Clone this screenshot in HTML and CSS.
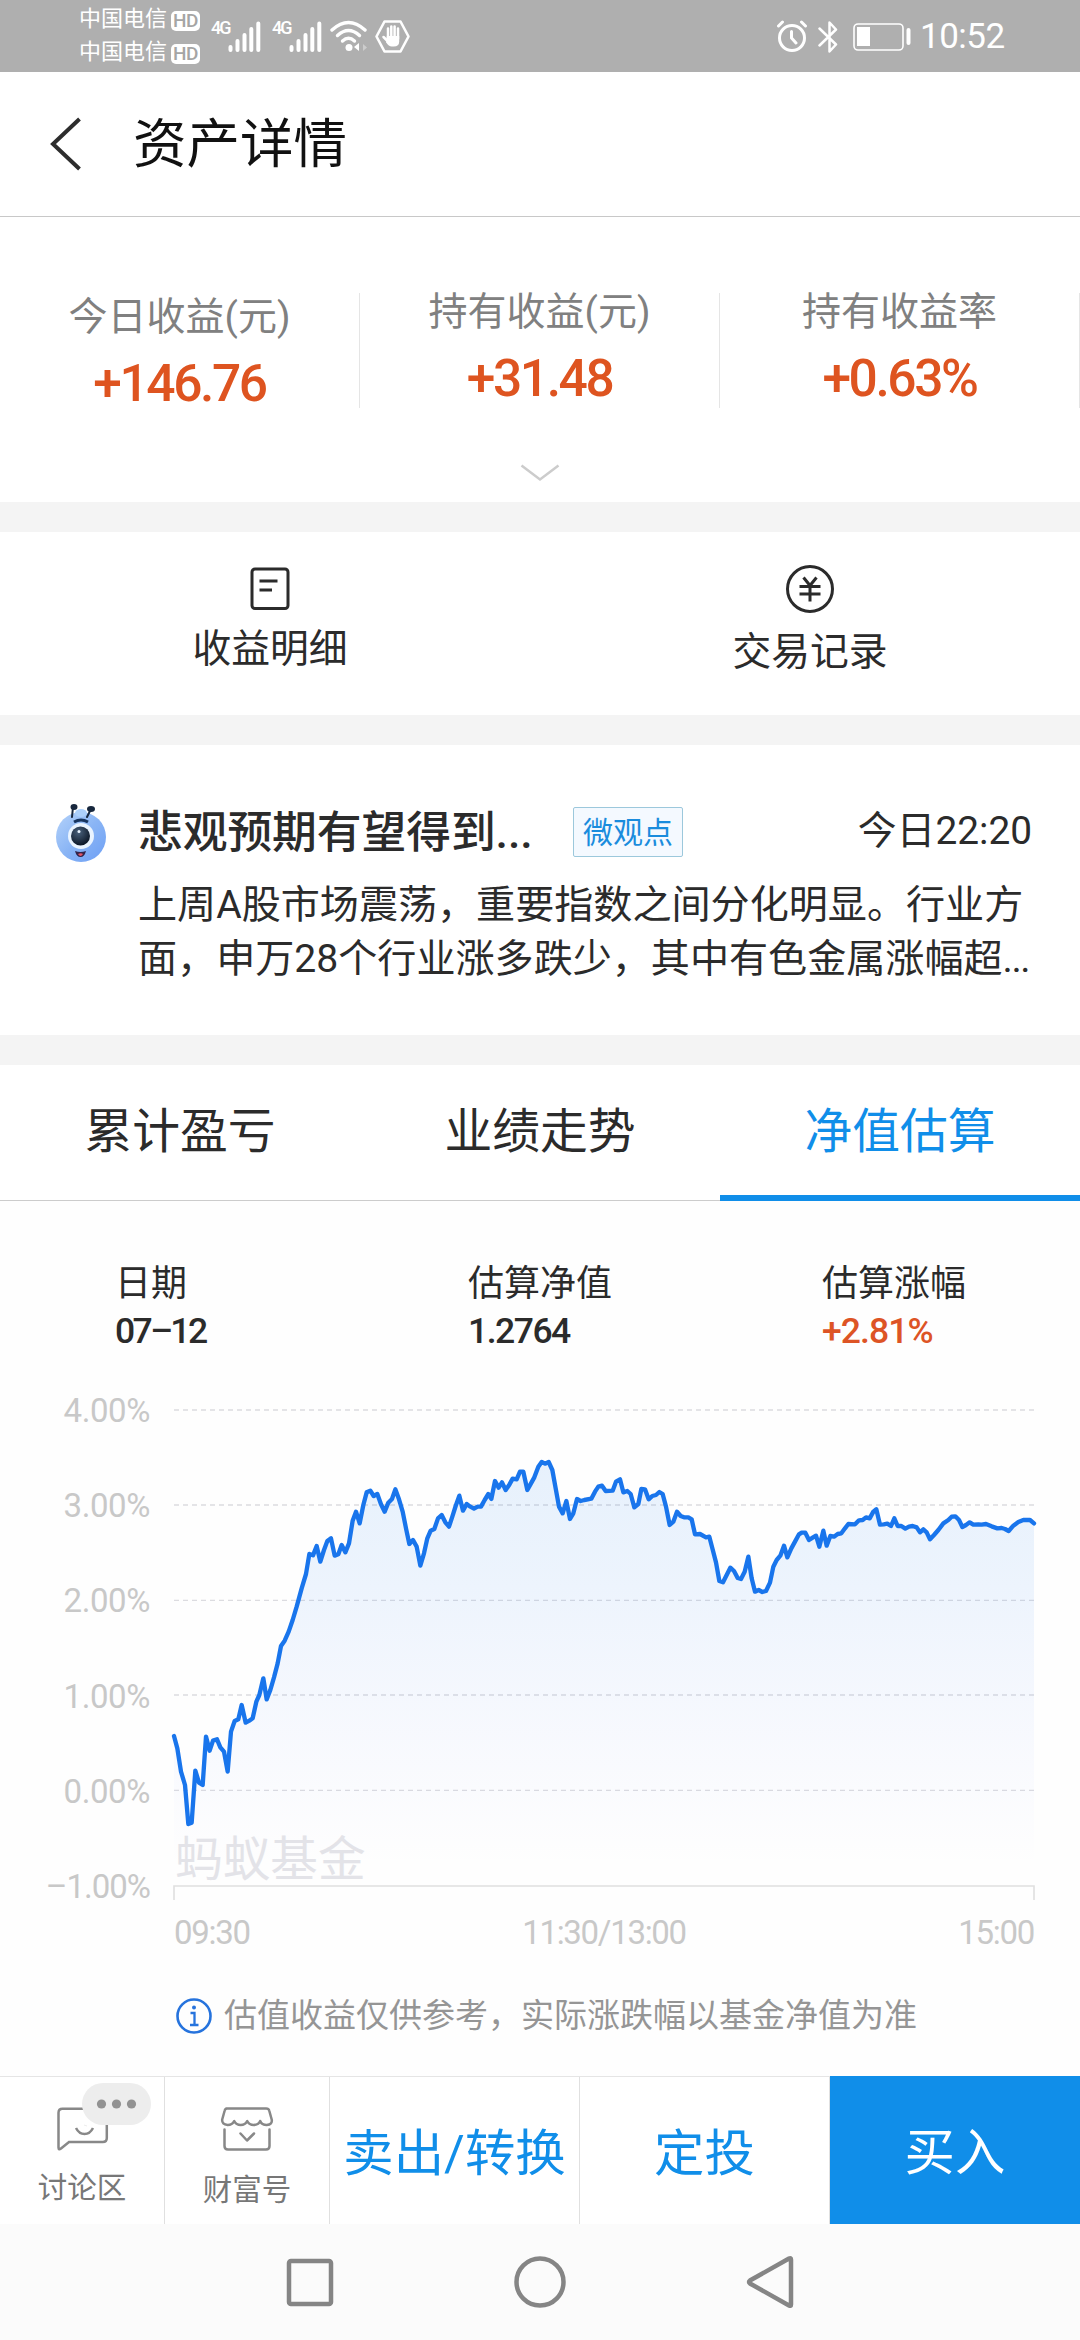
FILE: index.html
```html
<!DOCTYPE html>
<html lang="zh-CN">
<head>
<meta charset="utf-8">
<title>资产详情</title>
<link rel="stylesheet" href="styles.css">
</head>
<body>
<div class="status">
  <div class="carriers">
    <div class="carrier"><span>中国电信</span><span class="hd">HD</span></div>
    <div class="carrier"><span>中国电信</span><span class="hd">HD</span></div>
  </div>
  <div class="signal"><span class="net">4G</span><svg class="bars" width="33" height="31" viewBox="0 0 33 31"><path d="M2.5 26v3M9.5 20v9M16.5 14v15M23.3 8v21M30.3 2.500v26.500"/></svg></div>
  <div class="signal second"><span class="net">4G</span><svg class="bars" width="33" height="31" viewBox="0 0 33 31"><path d="M2.5 26v3M9.5 20v9M16.5 14v15M23.3 8v21M30.3 2.500v26.500"/></svg></div>
  <svg class="wifi" width="38" height="32" viewBox="0 0 38 32"><g fill="none" stroke="#fff" stroke-width="3.400" stroke-linecap="round"><path d="M2 10Q18.500-5 35 10"/><path d="M7.500 15.500Q18.500 5.500 29.500 15.500"/><path d="M12.500 21Q18.500 15.500 24.500 21"/></g><circle cx="19" cy="27.500" r="3.500" fill="#fff"/><path d="M24 27l5-4v8z" fill="#fff"/><path d="M33 24l4 3.500-4 3.500z" fill="#ccc"/></svg>
  <svg class="hand" width="35" height="33" viewBox="0 0 35 33"><path d="M9.500 1.500h16L33.500 16.500l-8 15h-16L1.500 16.500z" fill="none" stroke="#fff" stroke-width="2.600" stroke-linejoin="round"/><path d="M13 20V8.500M16.300 17V6.500M19.600 17V6.500M23 19V8.500M8.500 17l5.500 5.500" stroke="#fff" stroke-width="2.500" stroke-linecap="round"/><path d="M11.800 16h12.400v5.500q0 5-5.500 5h-2q-3 0-5.500-4z" fill="#fff"/></svg>
  <div class="status-right">
    <svg width="31" height="33" viewBox="0 0 31 33"><g fill="none" stroke="#fff" stroke-width="3" stroke-linecap="round"><circle cx="15" cy="18" r="12.500"/><path d="M14.500 11.500V18l4.500 5M1.500 6l4-4M28.500 6l-4-4"/></g></svg>
    <svg class="bt" width="20" height="34" viewBox="0 0 20 34"><path d="M1.500 8.500L18 24.500 11.500 31.500V2.500L18 9.500 1.500 25.500" fill="none" stroke="#fff" stroke-width="2.500" stroke-linejoin="round" stroke-linecap="round"/></svg>
    <svg class="battery" width="59" height="28" viewBox="0 0 59 28"><rect x="1" y="1" width="49" height="26" rx="4" fill="none" stroke="#fff" stroke-width="1.600"/><rect x="4" y="4" width="13" height="19" fill="#fff"/><rect x="53.500" y="5" width="4" height="17" rx="2" fill="#fff"/></svg>
    <span class="clock">10:52</span>
  </div>
</div>

<header class="header">
  <svg width="32" height="54" viewBox="0 0 32 54"><path d="M29.500 2L3 27l26.500 25" fill="none" stroke="#2d2d2d" stroke-width="4"/></svg>
  <h1>资产详情</h1>
</header>

<section class="summary">
  <div class="stats">
    <div class="stat first"><div class="stat-label">今日收益(元)</div><div class="stat-value">+146.76</div></div>
    <div class="stat"><div class="stat-label">持有收益(元)</div><div class="stat-value">+31.48</div></div>
    <div class="stat"><div class="stat-label">持有收益率</div><div class="stat-value">+0.63%</div></div>
  </div>
  <svg class="chevron" width="40" height="20" viewBox="0 0 40 20"><path d="M1.500 2.500L20 16.500 38.500 2.500" fill="none" stroke="#ccc" stroke-width="2.500"/></svg>
</section>

<section class="actions">
  <div class="action"><svg width="50" height="50" viewBox="0 0 50 50"><g fill="none" stroke="#2b2b2b" stroke-width="3"><rect x="7" y="5" width="36" height="39.500" rx="3"/><path d="M14.500 17h18M14.500 26h12.500"/></g></svg><span>收益明细</span></div>
  <div class="action trade"><svg width="50" height="50" viewBox="0 0 50 50"><g fill="none" stroke="#2b2b2b" stroke-width="3"><circle cx="25" cy="25" r="22.500"/><path d="M18.500 13.500L25 21.500l6.500-8M14.500 22.500h21M14.500 30h21M25 21.500V37.500"/></g></svg><span>交易记录</span></div>
</section>

<section class="news">
  <svg class="ant" width="54" height="60" viewBox="0 0 54 60">
    <defs><linearGradient id="body" x1="0" y1="0" x2="1" y2="1"><stop offset="0" stop-color="#b5d3fa"/><stop offset=".5" stop-color="#8ab5f5"/><stop offset="1" stop-color="#6d9ff5"/></linearGradient><radialGradient id="eye" cx=".4" cy=".3" r=".7"><stop offset="0" stop-color="#49617c"/><stop offset="1" stop-color="#0c1727"/></radialGradient></defs>
    <circle cx="26" cy="34" r="25" fill="url(#body)"/><ellipse cx="26" cy="10" rx="6" ry="4" fill="#acd0fb"/>
    <path d="M17 14L18 4M32 14l4-8" stroke="#17273d" stroke-width="2" stroke-linecap="round"/><ellipse cx="19" cy="4" rx="3.500" ry="3" fill="#17273d"/><ellipse cx="36" cy="6" rx="4" ry="3" fill="#17273d"/>
    <path d="M19 19q7-4 14 0" fill="none" stroke="#17355f" stroke-width="3"/>
    <circle cx="26" cy="33" r="13" fill="#eaf4ff"/><circle cx="25.500" cy="33" r="9.500" fill="url(#eye)"/><circle cx="24" cy="28.500" r="1.500" fill="#e8f3ff"/>
    <path d="M20 48q5.500 2 11 0-1.500 6-5.500 6t-5.500-6z" fill="#33244a"/><path d="M23 51q3-1.500 5 0-2.500 4-5 0z" fill="#e45668"/>
  </svg>
  <div class="news-main">
    <div class="news-head"><strong>悲观预期有望得到...</strong><span class="tag">微观点</span><time>今日22:20</time></div>
    <p>上周A股市场震荡，重要指数之间分化明显。行业方<br>面，申万28个行业涨多跌少，其中有色金属涨幅超<span class="dots">...</span></p>
  </div>
</section>

<nav class="tabs"><div class="tab">累计盈亏</div><div class="tab">业绩走势</div><div class="tab active">净值估算</div></nav>

<section class="estimate">
  <div class="figures">
    <div><div class="fig-label">日期</div><div class="fig-value date">07–12</div></div>
    <div><div class="fig-label">估算净值</div><div class="fig-value">1.2764</div></div>
    <div><div class="fig-label">估算涨幅</div><div class="fig-value up">+2.81%</div></div>
  </div>
  <div class="chart">
    <div class="y-axis"><span>4.00%</span><span>3.00%</span><span>2.00%</span><span>1.00%</span><span>0.00%</span><span>–1.00%</span></div>
    <div class="plot">
      <svg width="900" height="510" viewBox="0 0 2700 1530">
        <defs>
          <linearGradient id="fill" gradientUnits="userSpaceOnUse" x1="0" y1="180" x2="0" y2="1400"><stop offset="0" stop-color="#1677e8" stop-opacity=".1"/><stop offset=".3" stop-color="#1677f0" stop-opacity=".075"/><stop offset="1" stop-color="#5060ff" stop-opacity="0"/></linearGradient>
          <path id="line" d="M72 1008L82 1045 93 1115 105 1155 115 1272 125 1268 136 1112 147 1148 158 1155 168 1010 179 1052 189 1022 201 1018 211 1042 222 1055 233 1115 243 995 254 963 265 958 275 915 287 968 298 962 308 955 319 905 328 885 340 835 350 898 361 870 372 832 383 790 393 738 404 722 416 695 428 660 440 620 455 565 468 522 478 462 489 466 500 438 511 485 522 450 532 423 543 415 554 467 565 463 575 435 586 457 597 430 608 362 618 335 629 370 640 315 650 277 661 272 671 288 682 282 693 313 704 335 715 308 726 297 736 268 747 298 758 335 768 385 778 432 789 420 800 440 811 497 822 460 832 415 842 392 853 387 864 355 875 345 886 367 897 380 907 350 917 318 928 287 939 332 950 312 961 320 972 326 983 320 993 320 1004 300 1015 282 1024 297 1035 243 1046 263 1056 247 1067 270 1078 254 1088 236 1100 238 1110 215 1120 215 1132 270 1143 250 1153 232 1165 200 1175 186 1185 191 1196 186 1207 210 1217 265 1227 320 1238 340 1249 303 1260 357 1270 340 1281 297 1292 303 1303 300 1324 296 1335 275 1345 260 1356 257 1367 273 1388 272 1398 245 1410 238 1420 277 1432 273 1442 282 1453 322 1465 312 1474 267 1485 268 1496 298 1507 288 1518 285 1528 276 1538 282 1548 320 1559 375 1570 365 1581 335 1592 348 1602 352 1615 352 1625 358 1635 403 1650 402 1668 412 1678 410 1687 445 1698 487 1708 543 1719 547 1730 525 1741 503 1752 513 1763 534 1773 537 1784 515 1795 470 1805 535 1815 575 1826 570 1837 576 1848 573 1860 548 1870 500 1880 480 1891 467 1902 437 1912 472 1924 445 1935 425 1947 403 1955 398 1966 398 1977 420 1988 413 1998 407 2008 440 2020 392 2030 437 2041 408 2052 410 2063 402 2074 400 2085 385 2095 372 2115 373 2127 361 2138 360 2148 352 2159 355 2170 335 2179 328 2190 374 2201 373 2212 371 2223 378 2233 355 2243 378 2254 378 2266 386 2277 380 2288 378 2300 382 2310 397 2320 388 2330 397 2340 418 2352 405 2365 390 2380 370 2395 360 2405 350 2416 349 2427 360 2437 381 2448 375 2459 367 2470 374 2485 373 2495 374 2508 372 2525 379 2542 385 2555 384 2565 387 2576 393 2590 377 2605 366 2620 360 2640 360 2652 370"/>
          <clipPath id="under"><path d="M72 1008L82 1045 93 1115 105 1155 115 1272 125 1268 136 1112 147 1148 158 1155 168 1010 179 1052 189 1022 201 1018 211 1042 222 1055 233 1115 243 995 254 963 265 958 275 915 287 968 298 962 308 955 319 905 328 885 340 835 350 898 361 870 372 832 383 790 393 738 404 722 416 695 428 660 440 620 455 565 468 522 478 462 489 466 500 438 511 485 522 450 532 423 543 415 554 467 565 463 575 435 586 457 597 430 608 362 618 335 629 370 640 315 650 277 661 272 671 288 682 282 693 313 704 335 715 308 726 297 736 268 747 298 758 335 768 385 778 432 789 420 800 440 811 497 822 460 832 415 842 392 853 387 864 355 875 345 886 367 897 380 907 350 917 318 928 287 939 332 950 312 961 320 972 326 983 320 993 320 1004 300 1015 282 1024 297 1035 243 1046 263 1056 247 1067 270 1078 254 1088 236 1100 238 1110 215 1120 215 1132 270 1143 250 1153 232 1165 200 1175 186 1185 191 1196 186 1207 210 1217 265 1227 320 1238 340 1249 303 1260 357 1270 340 1281 297 1292 303 1303 300 1324 296 1335 275 1345 260 1356 257 1367 273 1388 272 1398 245 1410 238 1420 277 1432 273 1442 282 1453 322 1465 312 1474 267 1485 268 1496 298 1507 288 1518 285 1528 276 1538 282 1548 320 1559 375 1570 365 1581 335 1592 348 1602 352 1615 352 1625 358 1635 403 1650 402 1668 412 1678 410 1687 445 1698 487 1708 543 1719 547 1730 525 1741 503 1752 513 1763 534 1773 537 1784 515 1795 470 1805 535 1815 575 1826 570 1837 576 1848 573 1860 548 1870 500 1880 480 1891 467 1902 437 1912 472 1924 445 1935 425 1947 403 1966 398 1977 420 1998 407 2008 440 2020 392 2030 437 2041 408 2074 400 2095 372 2115 373 2148 352 2159 355 2179 328 2190 374 2223 378 2233 355 2243 378 2266 386 2300 382 2310 397 2320 388 2340 418 2380 370 2405 350 2416 349 2437 381 2459 367 2470 374 2508 372 2542 385 2576 393 2605 366 2620 360 2640 360 2652 370V1458H72z"/></clipPath>
        </defs>
        <path class="grid" d="M72 30H2655M72 315H2655M72 601H2655M72 885H2655M72 1171H2655"/>
        <rect x="72" y="150" width="2580" height="1308" fill="url(#fill)" clip-path="url(#under)"/>
        <text class="watermark" x="75" y="1427">蚂蚁基金</text>
        <path class="base" d="M72 1500V1458H2652V1500"/>
        <use href="#line" class="trend"/>
      </svg>
      <div class="x-axis"><span>09:30</span><span>11:30/13:00</span><span>15:00</span></div>
    </div>
  </div>
  <div class="notice"><svg width="38" height="38" viewBox="0 0 38 38"><circle cx="19" cy="19" r="16.500" fill="none" stroke="#2673dd" stroke-width="2.600"/><circle cx="19" cy="10.500" r="2" fill="#2673dd"/><path d="M15.500 16H19.500V27.500M15 28h8.500" fill="none" stroke="#2673dd" stroke-width="2.300"/></svg><span>估值收益仅供参考，实际涨跌幅以基金净值为准</span></div>
</section>

<footer class="toolbar">
  <div class="tool"><svg width="164" height="80" viewBox="0 0 164 80"><path d="M106.800 40V61q0 4-4 4H69l-8 6.500q-2.500 2-2.500-1V35.700q0-4 4-4H90M76 51q3 6 8.500 6t8.500-6" fill="none" stroke="#888" stroke-width="2.500"/><rect x="82" y="6" width="69" height="42" rx="21" fill="#ededed"/><g fill="#929292"><circle cx="101.500" cy="27" r="4.600"/><circle cx="116.500" cy="27" r="4.600"/><circle cx="131.500" cy="27" r="4.600"/></g><path d="M84 48l3 1" stroke="#ededed"/></svg><span>讨论区</span></div>
  <div class="tool shop"><svg width="164" height="80" viewBox="0 0 164 80"><g fill="none" stroke="#888" stroke-width="2.500" stroke-linecap="round" stroke-linejoin="round"><path d="M62 31.500H102q2.500 0 3 2l2.500 9q1 5-5 5.500-5 0-6.500-4-2 4-6.500 4t-6.500-4q-2 4-6.500 4t-6.500-4q-2 4-6.500 4-6-.5-5.500-5.500l2.500-9q.5-2 2.500-2z" transform="translate(-.8)"/><path d="M59.500 52.500V69q0 3.500 3.500 3.500H101q3.500 0 3.500-3.500V52.500M75.500 56.500L82 63.500l7-7"/></g></svg><span>财富号</span></div>
  <div class="cta">卖出/转换</div>
  <div class="cta">定投</div>
  <div class="cta buy">买入</div>
</footer>

<div class="sysnav">
  <svg width="52" height="52" viewBox="0 0 52 52"><rect x="5" y="5" width="42" height="43" rx="2"/></svg>
  <svg width="52" height="52" viewBox="0 0 52 52"><circle cx="26" cy="26" r="23.500"/></svg>
  <svg width="52" height="56" viewBox="0 0 52 56"><path d="M47 5.500V50.500q0 2-2 1L6 29.500q-2-1.500 0-3L45 4.500q2-1 2 1z"/></svg>
</div>
</body>
</html>
```
FILE: styles.css
```css
* { box-sizing: border-box; }
body { margin: 0; width: 1080px; height: 2340px; display: flex; flex-direction: column; background: #f4f4f4; color: #2b2b2b; font-family: Roboto, "Noto Sans CJK SC", sans-serif; overflow: hidden; white-space: nowrap; }
svg { display: block; flex: none; }

.status { height: 72px; background: #afafaf; color: #fff; display: flex; align-items: flex-start; padding-left: 79px; flex: none; }
.carriers { padding-top: 4px; width: 132px; }
.carrier { display: flex; align-items: center; height: 33px; font-size: 22px; line-height: 28px; }
.carrier > span:first-child { margin-top: -3px; }
.hd { margin-left: 4px; width: 29px; height: 20px; border-radius: 5px; background: #fff; color: #a5a5a5; font-size: 19px; line-height: 20px; font-weight: 500; text-align: center; letter-spacing: -.5px; }
.signal { display: flex; align-items: flex-start; padding-top: 20px; width: 61px; }
.net { width: 17px; font-size: 18px; line-height: 16px; font-weight: 500; letter-spacing: -2px; }
.bars { fill: none; stroke: #fff; stroke-width: 4; stroke-linecap: round; margin-top: 1px; }
.second { width: 58px; }
.wifi { margin-top: 20px; }
.hand { margin: 20px 0 0 7px; }
.status-right { display: flex; align-items: center; margin: 19px 77px 0 auto; height: 35px; }
.bt { margin-left: 10px; }
.battery { margin-left: 15px; }
.clock { margin-left: 8px; font-size: 35px; line-height: 37px; width: 83px; letter-spacing: -.5px; }

.header { height: 145px; flex: none; background: #fff; border-bottom: 1px solid #c8c8c8; display: flex; align-items: center; padding-left: 50px; }
.header h1 { margin: 2px 0 0 51px; font-weight: 400; font-size: 53.5px; line-height: 70px; color: #111; }

.summary { height: 285px; flex: none; background: #fff; padding-top: 76px; }
.stats { display: grid; grid-template-columns: repeat(3, 1fr); height: 109px; }
.stat { border-right: 1px solid #e5e5e5; text-align: center; }
.stat.first { padding-top: 5px; }
.stat-label { font-size: 39px; line-height: 38px; color: #808080; }
.stat-value { margin-top: 24px; font-size: 51.5px; line-height: 48px; font-weight: 500; letter-spacing: -2.4px; color: #de5420; }
.chevron { margin: 61px auto 0; }

.actions { height: 183px; flex: none; margin-top: 30px; background: #fff; display: grid; grid-template-columns: 1fr 1fr; padding-top: 32px; }
.action { display: flex; flex-direction: column; align-items: center; font-size: 38.8px; line-height: 44px; }
.action span { margin-top: 13px; }
.trade span { margin-top: 16px; }

.news { height: 290px; flex: none; margin-top: 30px; background: #fff; display: flex; padding: 57px 48px 0 55px; }
.ant { margin-top: 1px; }
.news-main { margin-left: 29px; flex: 1; }
.news-head { display: flex; align-items: center; height: 60px; }
.news-head strong { font-size: 44.8px; font-weight: 500; line-height: 60px; width: 435px; padding-top: 2px; letter-spacing: -.1px; }
.tag { width: 110px; height: 50px; border: 1px solid #9cc8dc; border-radius: 2px; background: #f4f9ff; color: #1a8cdd; font-size: 30px; line-height: 49px; text-align: center; }
.news-head time { margin-left: auto; font-size: 38.8px; line-height: 56px; margin-top: -2px; }
.news p { margin: 16px 0 0; font-size: 39.1px; line-height: 54px; }
.dots { letter-spacing: -1.5px; }

.tabs { height: 136px; flex: none; margin-top: 30px; background: #fff; display: grid; grid-template-columns: repeat(3, 1fr); border-bottom: 1px solid #ccc; }
.tab { text-align: center; font-size: 47.8px; line-height: 135px; height: 136px; }
.tab.active { color: #108ee9; border-bottom: 6px solid #108ee9; }

.estimate { flex: 1; background: #fefefe; padding-top: 63px; }
.figures { display: grid; grid-template-columns: 353px 354px 1fr; padding-left: 115px; }
.fig-label { font-size: 36px; line-height: 41px; }
.fig-value { margin-top: 6px; font-size: 35.5px; line-height: 40px; letter-spacing: -1.5px; font-weight: 500; }
.date { letter-spacing: -2.6px; }
.up { color: #dd5425; letter-spacing: -.9px; }
.chart { display: flex; margin-top: 12px; }
.y-axis { width: 150px; display: flex; flex-direction: column; text-align: right; color: #c8c8c8; font-size: 33px; }
.y-axis span { line-height: 95.2px; letter-spacing: -.4px; }
.y-axis span:last-child { letter-spacing: -1px; }
.plot { padding-top: 37px; width: 900px; }
.grid { fill: none; stroke: #dcdce0; stroke-width: 4; stroke-dasharray: 15 12; }
.trend { fill: none; stroke: #1975ec; stroke-width: 13; stroke-linejoin: round; stroke-linecap: round; }
.base { fill: none; stroke: #e0e0e0; stroke-width: 5; }
.watermark { font-size: 143px; fill: #e3e3e8; }
.x-axis { display: flex; justify-content: space-between; padding: 2px 16px 0 24px; font-size: 33px; line-height: 41px; letter-spacing: -1.3px; color: #c8c8c8; }
.notice { display: flex; align-items: center; margin-top: 41px; height: 44px; padding-left: 175px; font-size: 33px; color: #959595; }
.notice span { margin-left: 11px; line-height: 40px; margin-top: -1px; }

.toolbar { height: 148px; flex: none; background: #fff; border-top: 1px solid #e5e5e5; display: grid; grid-template-columns: 165px 165px 250px 250px 250px; }
.toolbar > div { border-right: 1px solid #e0e0e0; }
.tool { text-align: center; font-size: 29.5px; line-height: 38px; color: #777; }
.tool span { display: block; margin-top: 12px; }
.shop span { margin-top: 14px; }
.cta { font-size: 50.4px; line-height: 154px; text-align: center; color: #108ee9; height: 147px; }
.toolbar > .buy { background: #108ee9; color: #fff; border: 0; margin-top: -1px; height: 148px; }

.sysnav { height: 116px; flex: none; background: #fbfbfb; display: flex; align-items: center; justify-content: center; gap: 178px; }
.sysnav svg { fill: none; stroke: #858585; stroke-width: 4.500; }
```
